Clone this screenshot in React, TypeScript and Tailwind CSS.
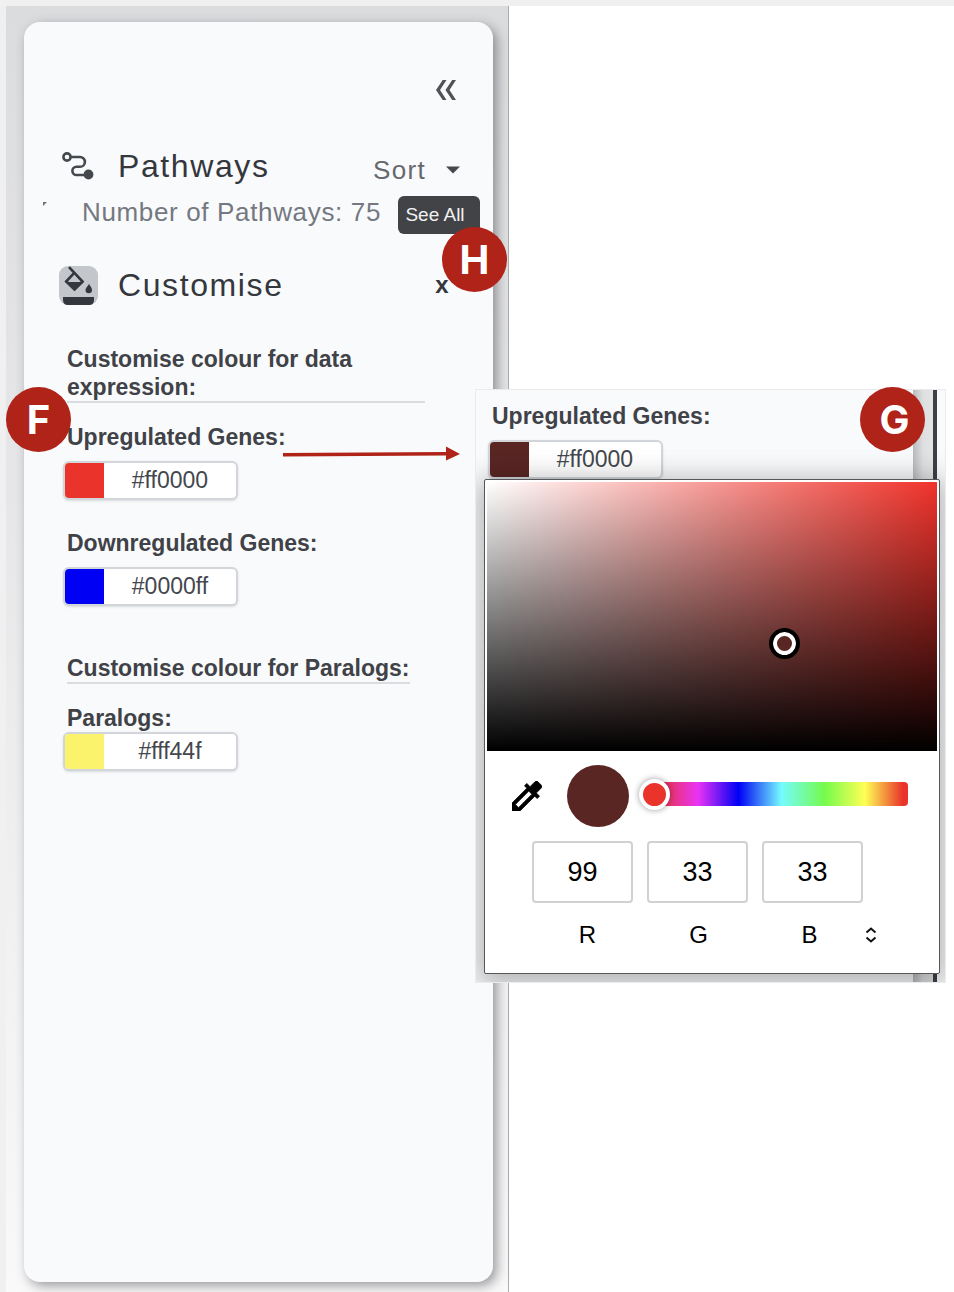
import { useState } from "react";
import type { ReactNode } from "react";

function Badge({ children, className }: { children: ReactNode; className: string }) {
  return (
    <span
      className={`absolute z-20 flex size-[65px] items-center justify-center rounded-full bg-[#af2318] font-[Inter,sans-serif] text-[40px] leading-none font-bold text-white ${className}`}
    >
      {children}
    </span>
  );
}

function ColourField({
  id,
  label,
  swatch,
  value,
  gap,
}: {
  id: string;
  label: string;
  swatch: string;
  value: string;
  gap: string;
}) {
  const [colour, setColour] = useState(swatch);
  const [text, setText] = useState(value);
  return (
    <div className={`flex flex-col items-start ${gap}`}>
      <label htmlFor={id} className="pl-1 text-[23px] leading-7 font-bold">
        {label}
      </label>
      <div className="flex h-[39px] w-[175px] overflow-hidden rounded-md border-2 border-[#d2d5da] bg-white shadow-sm">
        <input
          type="color"
          aria-label={`${label} swatch`}
          value={colour}
          onChange={(e) => setColour(e.target.value)}
          className="h-full w-[39px] shrink-0 cursor-pointer appearance-none border-0 bg-transparent p-0 [&::-webkit-color-swatch]:rounded-none [&::-webkit-color-swatch]:border-0 [&::-webkit-color-swatch-wrapper]:p-0"
        />
        <input
          id={id}
          type="text"
          value={text}
          onChange={(e) => setText(e.target.value)}
          className="h-full w-full min-w-0 bg-transparent text-center text-[23px] leading-8 text-[#44474d] outline-none"
        />
      </div>
    </div>
  );
}

function RouteIcon() {
  return (
    <svg viewBox="0 0 34 30" className="h-[30px] w-[34px]" fill="none" stroke="#45484c" strokeWidth="2.6" aria-hidden="true">
      <circle cx="6" cy="6" r="3.6" />
      <path d="M9.600 6H19a4.900 4.900 0 0 1 0 9.800h-3.500a4.100 4.100 0 0 0 0 8.200H25" />
      <circle cx="27.500" cy="23.500" r="4.900" fill="#45484c" stroke="none" />
    </svg>
  );
}

function BucketIcon() {
  return (
    <svg viewBox="0 0 39 39" className="size-[39px]" aria-hidden="true">
      <rect width="39" height="39" rx="9" fill="#c3c6ca" />
      <path d="M10 1.200L23.500 15.500 15.500 23.500 7.200 15.500 15 7.200" fill="none" stroke="#34383e" strokeWidth="2.600" />
      <path d="M6.500 16h18.500l-9.500 9z" fill="#34383e" />
      <path d="M30 18c2 3 3 4.300 3 6a3.200 3.200 0 0 1-6.500 0c0-1.700 1.500-3 3.500-6z" fill="#34383e" />
      <path d="M4 31h31v3q0 5-5 5H9q-5 0-5-5z" fill="#34383e" />
    </svg>
  );
}

function Sidebar() {
  return (
    <aside className="flex w-[503px] shrink-0 flex-col border-r border-[#a9abad] bg-linear-to-b from-[#dbdcde] to-[#faf9fa] pt-4 pr-[15px] pb-[10px] pl-[18px]">
      <div className="relative flex grow flex-col rounded-2xl bg-[#f9fafc] pt-[52px] pr-[13px] pl-[35px] text-[#404247] shadow-[4px_4px_12px_rgba(60,62,66,0.5)]">
        <button type="button" aria-label="Collapse panel" className="mr-[18px] flex size-8 items-center justify-center self-end">
          <svg viewBox="0 0 22 20" className="h-5 w-[22px]" fill="#505256" aria-hidden="true">
            <path d="M7.700 0H11.500L5 10 11.500 20H7.700L1 10z" />
            <path d="M17.200 0H21L14.500 10 21 20h-3.800L10.500 10z" />
          </svg>
        </button>

        <section className="pt-10">
          <div className="flex h-10 items-center">
            <div className="w-[59px] pl-0.5">
              <RouteIcon />
            </div>
            <h2 className="grow text-[32px] leading-10 tracking-wider text-[#34373c]">Pathways</h2>
            <button type="button" className="mr-5 flex items-center gap-5 pt-2 text-[26px] leading-8 tracking-wider text-[#66686c]">
              Sort
              <svg viewBox="0 0 14 8" className="h-2 w-[14px]" fill="#45484c" aria-hidden="true">
                <path d="M0 .5h14L7 7.500z" />
              </svg>
            </button>
          </div>
          <div className="mt-[10px] flex h-10 items-start">
            <svg viewBox="0 0 4 4" className="absolute top-[180px] left-[19px] size-1" fill="#6c6f74" aria-hidden="true">
              <path d="M0 0h4L0 4z" />
            </svg>
            <p className="grow pl-[23px] text-[26px] leading-8 tracking-wide text-[#747880]">Number of Pathways: 75</p>
            <button type="button" className="h-[38px] w-[82px] rounded-md bg-[#414347] pr-2 text-[19px] leading-6 text-[#f1f1f2]">
              See All
            </button>
          </div>
        </section>

        <section className="pt-[27px]">
          <div className="flex h-11 items-center">
            <div className="w-[59px]">
              <BucketIcon />
            </div>
            <h2 className="grow text-[32px] leading-10 tracking-wider text-[#34373c]">Customise</h2>
            <button type="button" aria-label="Close customise" className="mr-[26px] flex w-6 items-center justify-center text-[24px] leading-8 font-bold text-[#34373c]">
              x
            </button>
          </div>

          <div className="pt-[38px] pr-[55px] pl-1">
            <h3 className="ml-1 border-b-2 border-[#dadce0] text-[23px] leading-7 font-bold">
              Customise colour for data expression:
            </h3>
            <div className="flex flex-col gap-[29px] pt-5">
              <ColourField id="up" label="Upregulated Genes:" swatch="#e9332b" value="#ff0000" gap="gap-[10px]" />
              <ColourField id="down" label="Downregulated Genes:" swatch="#0000f5" value="#0000ff" gap="gap-[10px]" />
            </div>
            <h3 className="mt-12 ml-1 w-fit border-b-2 border-[#dadce0] text-[23px] leading-7 font-bold">
              Customise colour for Paralogs:
            </h3>
            <div className="pt-5">
              <ColourField id="paralogs" label="Paralogs:" swatch="#fbf36b" value="#fff44f" gap="gap-0" />
            </div>
          </div>
        </section>
        <Badge className="top-[365px] -left-[18px]">F</Badge>
        <Badge className="top-[205px] left-[418px]">H</Badge>
      </div>
    </aside>
  );
}

const channels = [
  { name: "R", value: "99" },
  { name: "G", value: "33" },
  { name: "B", value: "33" },
];

function PickerInset() {
  return (
    <div className="absolute top-[389px] left-[475px] z-10 w-[471px]">
      <section
        aria-label="Colour picker"
        className="relative overflow-hidden border border-[#ebebed] bg-[#f9fafc] pb-2 text-[#404247]"
      >
        <div className="absolute inset-y-0 right-2 w-6 border-r-4 border-[#3d3f47] bg-linear-to-r from-[#b9babc] via-[#dedfe0] to-[#e4e4e5]" />
        <div className="relative pt-3 pl-3">
          <ColourField id="picked" label="Upregulated Genes:" swatch="#592624" value="#ff0000" gap="gap-[10px]" />
        </div>
        <div className="relative mr-[5px] ml-2 rounded-xs border border-[#555759] bg-white p-0.5 shadow-[0_6px_28px_6px_rgba(0,0,0,0.28)]">
          <div className="relative h-[269px] bg-[linear-gradient(to_top,#000,transparent),linear-gradient(to_right,#fff,#f0332b)]">
            <span className="absolute top-[60%] left-[66%] -mt-[15px] -ml-[15px] size-[31px] rounded-full border-4 border-black bg-[#592624] shadow-[inset_0_0_0_4px_#fff]" />
          </div>
          <div className="flex items-center pt-[14px] pr-[29px] pl-[22px]">
            <button type="button" aria-label="Pick colour from screen" className="flex size-9 items-center justify-center">
              <svg viewBox="3 3 18 18" className="size-[30px]" fill="#000" stroke="#000" strokeWidth="0.5" aria-hidden="true">
                <path d="M20.710 5.630l-2.340-2.340a1 1 0 0 0-1.410 0l-3.120 3.120-1.930-1.910-1.410 1.410 1.420 1.420L3 16.250V21h4.750l8.920-8.920 1.420 1.420 1.410-1.410-1.920-1.920 3.120-3.120c.4-.4.4-1.030.010-1.420zM6.920 19L5 17.080l8.060-8.060 1.920 1.920L6.920 19z" />
              </svg>
            </button>
            <span className="ml-[22px] size-[62px] shrink-0 rounded-full bg-[#592624]" />
            <input
              type="range"
              aria-label="Hue"
              min="0"
              max="360"
              defaultValue="0"
              className="mb-1 ml-[26px] h-6 min-w-0 grow appearance-none rounded-sm bg-[linear-gradient(to_right,#e9332b,#e933f5_17%,#0000f5_33%,#75fbfd_50%,#75fb4c_67%,#ffff54_83%,#e9332b_98%)] [&::-webkit-slider-thumb]:-ml-4 [&::-webkit-slider-thumb]:size-[31px] [&::-webkit-slider-thumb]:appearance-none [&::-webkit-slider-thumb]:rounded-full [&::-webkit-slider-thumb]:border-4 [&::-webkit-slider-thumb]:border-solid [&::-webkit-slider-thumb]:border-white [&::-webkit-slider-thumb]:bg-[#e9332b] [&::-webkit-slider-thumb]:shadow-[0_0_6px_rgba(0,0,0,0.4)]"
            />
          </div>
          <div className="flex flex-col gap-4 pt-[14px] pb-5 pl-[45px] text-black">
            <div className="flex gap-[14px]">
              {channels.map((c) => (
                <input
                  key={c.name}
                  id={`channel-${c.name}`}
                  type="text"
                  defaultValue={c.value}
                  className="h-[62px] w-[101px] rounded-sm border-2 border-[#d1d1d1] bg-white text-center text-[27px] leading-8"
                />
              ))}
            </div>
            <div className="flex items-center">
              {channels.map((c) => (
                <label key={c.name} htmlFor={`channel-${c.name}`} className="w-[111px] text-center text-[24px] leading-8">
                  {c.name}
                </label>
              ))}
              <button type="button" aria-label="Change colour format" className="flex h-8 w-3 items-center justify-center">
                <svg viewBox="0 0 12 16" className="h-4 w-3" fill="none" stroke="#111" strokeWidth="2" aria-hidden="true">
                  <path d="M1.500 5.500L6 1.500l4.500 4M1.500 10.500L6 14.500l4.500-4" />
                </svg>
              </button>
            </div>
          </div>
        </div>
      </section>
      <Badge className="-top-0.5 right-[21px] pl-1">G</Badge>
    </div>
  );
}

export default function App() {
  return (
    <div className="relative flex min-h-screen flex-col overflow-hidden bg-[#f0f0f0] pt-[6px] pl-[6px] font-['Liberation_Sans',Arial,sans-serif]">
      <div className="flex grow">
        <Sidebar />
        <main className="grow bg-white" />
      </div>
      <svg viewBox="0 0 178 16" className="absolute top-[446px] left-[282px] z-20 h-4 w-[178px]" fill="#af2318" aria-hidden="true">
        <path d="M1 7l163-1V0.500L178 8l-14 6.500V9.500L1 10.500z" />
      </svg>
      <PickerInset />
    </div>
  );
}
